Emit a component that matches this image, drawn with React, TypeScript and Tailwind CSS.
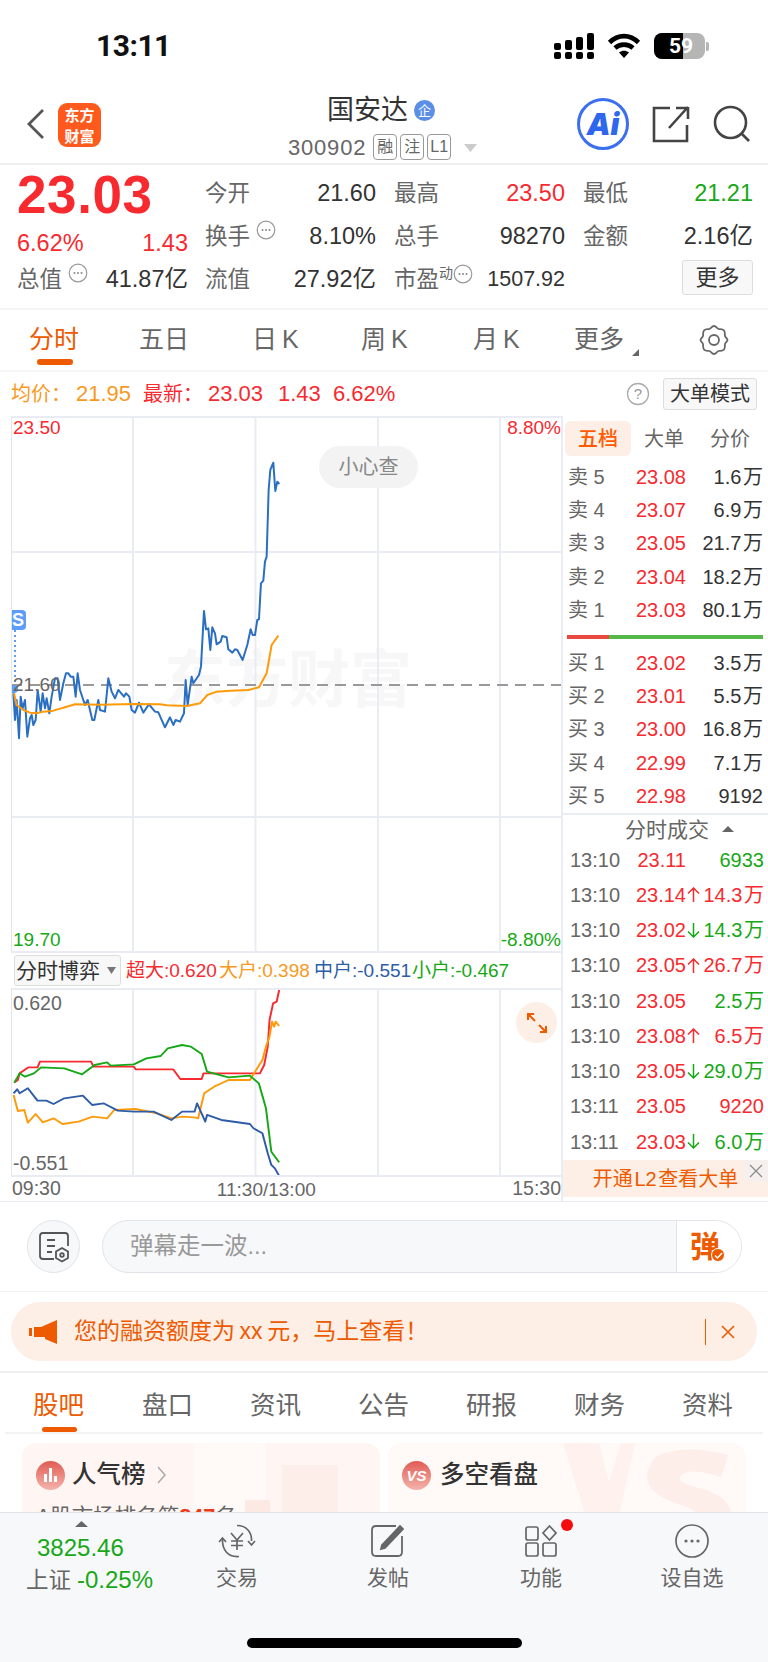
import React from "react";

const blue = "40,850 45,930 50,870 57,985 62,860 68,895 75,870 82,980 90,925 95,915 100,945 107,930 113,840 122,905 128,850 135,895 140,865 148,910 155,860 165,805 173,805 180,870 190,820 198,790 205,790 212,800 220,800 227,860 233,790 240,840 255,885 263,870 277,930 283,930 295,870 300,900 315,905 325,805 335,845 345,865 355,840 372,860 378,850 388,860 395,900 405,908 417,878 430,908 447,883 465,905 475,907 495,952 510,922 520,945 527,930 540,935 552,910 557,810 563,885 575,800 580,820 597,795 603,770 612,603 618,658 625,655 631,720 637,652 645,670 650,703 662,695 667,678 680,682 685,718 697,728 705,718 712,720 728,750 742,705 752,658 758,675 765,675 772,630 777,628 783,520 790,512 795,455 800,440 806,240 811,180 820,158 826,243 832,215 838,222";
const avg = "42,850 50,885 70,900 90,908 110,910 130,905 160,902 195,892 225,883 300,884 400,882 480,883 500,886 560,888 600,880 622,855 650,845 690,842 745,840 777,832 800,790 815,705 835,677";
const gRed = "40,458 50,450 55,430 80,412 105,412 112,395 255,395 262,410 375,410 380,418 485,418 505,447 565,447 570,430 728,430 740,405 750,350 755,270 765,220 775,215 782,180";
const gOrange = "38,495 50,543 68,540 78,578 100,552 120,577 150,565 175,582 220,575 260,560 300,565 320,540 380,537 440,550 480,565 510,560 545,562 555,565 572,490 600,470 640,450 700,450 735,390 745,350 755,320 762,275 768,290 772,275 782,288";
const gBlue = "38,490 48,478 55,490 78,475 105,512 130,512 150,522 180,505 232,497 258,525 290,520 330,542 375,545 430,545 480,570 510,545 545,545 552,520 575,575 580,555 620,570 700,582 710,595 735,610 750,670 760,705 770,715 782,738";
const gGreen = "40,458 55,430 70,440 95,430 115,412 180,415 230,433 265,405 300,397 310,407 375,403 410,385 450,378 470,355 510,345 535,350 565,372 580,425 640,442 700,437 725,460 745,535 760,665 782,697";

const sells = [["卖 5","23.08","1.6\u200a万"],["卖 4","23.07","6.9\u200a万"],["卖 3","23.05","21.7\u200a万"],["卖 2","23.04","18.2\u200a万"],["卖 1","23.03","80.1\u200a万"]];
const buys = [["买 1","23.02","3.5\u200a万"],["买 2","23.01","5.5\u200a万"],["买 3","23.00","16.8\u200a万"],["买 4","22.99","7.1\u200a万"],["买 5","22.98","9192"]];
const R = "text-[#f72a2f]";
const G = "text-[#16a816]";
const trades: [string,string,string,string,string][] = [
  ["13:10","23.11","","6933",G],
  ["13:10","23.14","up","14.3\u200a万",R],
  ["13:10","23.02","down","14.3\u200a万",G],
  ["13:10","23.05","up","26.7\u200a万",R],
  ["13:10","23.05","","2.5\u200a万",G],
  ["13:10","23.08","up","6.5\u200a万",R],
  ["13:10","23.05","down","29.0\u200a万",G],
  ["13:11","23.05","","9220",R],
  ["13:11","23.03","down","6.0\u200a万",G],
];

function Dots() {
  return (
    <svg width="20" height="20" viewBox="0 0 20 20" className="shrink-0">
      <circle cx="10" cy="10" r="8.8" fill="none" stroke="#999" strokeWidth="1.2" />
      <circle cx="6.5" cy="10" r="1" fill="#888" /><circle cx="10" cy="10" r="1" fill="#888" /><circle cx="13.5" cy="10" r="1" fill="#888" />
    </svg>
  );
}

function Cell({ label, value, cls = "text-[#333]", icon }: { label: string; value: string; cls?: string; icon?: React.ReactNode }) {
  return (
    <div className="flex items-center justify-between h-[43px]">
      <span className="flex items-start text-[#666] text-[22.5px]">{label}{icon}</span>
      <span className={`text-[23.5px] ${cls}`}>{value}</span>
    </div>
  );
}

function Chip({ children }: { children: React.ReactNode }) {
  return <span className="w-[24px] h-[26px] flex items-center justify-center border border-[#999] rounded-[4px] text-[16px] text-[#666] leading-none">{children}</span>;
}

function Grid({ y }: { y: number }) {
  return (
    <g stroke="#e9ecf3" strokeWidth="2">
      {[133, 255.5, 378, 500].map((x) => <line key={x} x1={x} x2={x} y1={y} y2={y + 600} />)}
    </g>
  );
}

function BottomItem({ label, children }: { label: string; children: React.ReactNode }) {
  return (
    <div className="flex flex-col items-center w-[110px] relative">
      <div className="h-[36px] flex items-center justify-center">{children}</div>
      <span className="text-[21px] text-[#666] mt-[6px] leading-[26px]">{label}</span>
    </div>
  );
}

function Arrow({ dir }: { dir: string }) {
  if (!dir) return null;
  return (
    <svg width="13" height="15" viewBox="0 0 13 15" fill="none" stroke={dir === "up" ? "#f72a2f" : "#16a816"} strokeWidth="1.5" className="mx-auto">
      {dir === "up" ? <path d="M6.5 15 V1 M1 6.5 L6.5 1 L12 6.5" /> : <path d="M6.5 0 V14 M1 8.5 L6.5 14 L12 8.5" />}
    </svg>
  );
}

export default function App() {
  return (
    <div className="relative w-[768px] h-[1662px] overflow-hidden bg-white flex flex-col [font-family:'Liberation_Sans','Noto_Sans_CJK_SC',sans-serif]">
      {/* status bar */}
      <div className="h-[90px] shrink-0 flex items-start pt-[29px] pl-[96px] pr-[58px] justify-between">
        <span className="text-[30px] leading-[34px] font-bold text-[#111] [font-family:Roboto,sans-serif] tracking-[-0.5px]">13:11</span>
        <div className="flex items-center gap-[13px] h-[32px] mt-[1px]">
          <svg width="40" height="26" viewBox="0 0 40 26" fill="#000">
            <rect x="0" y="10" width="7" height="7" rx="2" /><rect x="0" y="19" width="7" height="7" rx="2" />
            <rect x="11" y="7" width="7" height="10" rx="2" /><rect x="11" y="19" width="7" height="7" rx="2" />
            <rect x="22" y="4" width="7" height="13" rx="2" /><rect x="22" y="19" width="7" height="7" rx="2" />
            <rect x="33" y="0" width="7" height="17" rx="2" /><rect x="33" y="19" width="7" height="7" rx="2" />
          </svg>
          <svg width="34" height="26" viewBox="0 0 34 26" fill="none" stroke="#000" strokeWidth="4.6">
            <path d="M2.5 9.5 C11 1, 23 1, 31.5 9.5" />
            <path d="M8 15 C13 10.5, 21 10.5, 26 15" />
            <path d="M17 25 L12 19.5 C15 17.3, 19 17.3, 22 19.5 Z" fill="#000" stroke="none" />
          </svg>
          <div className="relative w-[56px] h-[26px] flex items-center">
            <div className="w-[51px] h-[26px] rounded-[8px] bg-[#b5b5b5] overflow-hidden">
              <div className="w-[29px] h-full bg-black" />
            </div>
            <div className="w-[3px] h-[9px] bg-[#b5b5b5] rounded-r-[2px] ml-[1px]" />
            <span className="absolute left-[9px] top-0 w-[36px] h-[26px] text-center leading-[26px] text-[21px] font-bold text-white [font-family:Roboto,sans-serif]">59</span>
          </div>
        </div>
      </div>

      {/* header */}
      <div className="h-[75px] shrink-0 flex items-center relative border-b-2 border-[#eeeeee]">
        <svg width="20" height="32" viewBox="0 0 20 32" className="ml-[26px] mb-[6px]" fill="none" stroke="#555" strokeWidth="2.8"><path d="M17 2 L3 16 L17 30" /></svg>
        <div className="ml-[12px] w-[43px] h-[44px] mb-[4px] rounded-[9px] bg-[#ff5a1e] text-white text-[15px] leading-[21px] font-bold flex flex-col items-center justify-center [font-family:'Noto_Sans_CJK_SC',sans-serif]">
          <p>东方</p>
          <p>财富</p>
        </div>
        <div className="absolute left-[280px] top-[2px] w-[200px] flex flex-col">
          <div className="flex items-center pl-[47px] h-[36px]">
            <span className="text-[27px] text-[#333] leading-[36px]">国安达</span>
            <span className="ml-[6px] w-[21px] h-[21px] rounded-full bg-[#5b8fe6] text-white text-[13px] flex items-center justify-center leading-none">企</span>
          </div>
          <div className="flex items-center pl-[8px] h-[30px] mt-[4px]">
            <span className="text-[22px] text-[#666] tracking-[0.8px] mr-[7px]">300902</span>
            <div className="flex gap-[3px]"><Chip>融</Chip><Chip>注</Chip><Chip>L1</Chip></div>
            <svg width="13" height="8" viewBox="0 0 13 8" className="ml-[13px] mt-[2px]"><path d="M0 0 H13 L6.5 8 Z" fill="#ccc" /></svg>
          </div>
        </div>
        <div className="ml-auto flex items-center mr-[17px] gap-[23px] mb-[6px]">
          <div className="relative w-[52px] h-[52px] rounded-full border-[3.5px] border-[#3c6ff0] flex items-center justify-center text-[#2f66ee] text-[30px] font-black italic leading-none [font-family:Inter,sans-serif]">Ai</div>
          <svg width="38" height="38" viewBox="0 0 38 38" fill="none" stroke="#444" strokeWidth="2.6">
            <path d="M18 3 H2 V36 H35 V20" />
            <path d="M36 3 H24 M36 2 V14 M36 2 L17 23" />
          </svg>
          <svg width="38" height="38" viewBox="0 0 38 38" fill="none" stroke="#444" strokeWidth="2.6">
            <circle cx="17.5" cy="17.5" r="15.5" /><path d="M28.5 28.5 L36 36" />
          </svg>
        </div>
      </div>

      {/* quote */}
      <div className="h-[145px] shrink-0 flex pl-[17px] pr-[16px] border-b-2 border-[#f5f5f5]">
        <div className="w-[171px] shrink-0 flex flex-col">
          <div className="h-[60px] text-[53px] leading-[60px] font-bold text-[#f72a2f] tracking-[0.6px]">23.03</div>
          <div className="h-[32px] flex justify-between items-end text-[23.5px] text-[#f72a2f] leading-[28px]"><span>6.62%</span><span>1.43</span></div>
          <div className="flex items-center justify-between h-[43px] mt-[1px]">
            <span className="flex items-start text-[#666] text-[22.5px]">总值<span className="ml-[6px]"><Dots /></span></span>
            <span className="text-[23.5px] text-[#333]">41.87亿</span>
          </div>
        </div>
        <div className="ml-[17px] flex-1 flex flex-col pt-[7px]">
          <div className="grid grid-cols-[171px_171px_170px] gap-x-[18px] items-center">
            <Cell label="今开" value="21.60" />
            <Cell label="最高" value="23.50" cls={R} />
            <Cell label="最低" value="21.21" cls={G} />
            <Cell label="换手" value="8.10%" icon={<span className="ml-[6px]"><Dots /></span>} />
            <Cell label="总手" value="98270" />
            <Cell label="金额" value="2.16亿" />
            <Cell label="流值" value="27.92亿" />
            <div className="flex items-center justify-between h-[43px]">
              <span className="flex items-start text-[#666] text-[22.5px] leading-[32px]">市盈<span className="text-[14px] leading-[18px]">动</span><Dots /></span>
              <span className="text-[21.5px] text-[#333]">1507.92</span>
            </div>
            <div className="flex justify-end">
              <span className="w-[71px] h-[35px] border border-[#ddd] bg-[#f8f8f9] rounded-[3px] text-[22px] text-[#333] flex items-center justify-center mb-[5px]">更多</span>
            </div>
          </div>
        </div>
      </div>

      {/* period tabs */}
      <div className="h-[62px] shrink-0 relative flex items-center border-b-2 border-[#f6f6f6] text-[25px] text-[#666]">
        <div className="w-[139px] pl-[29px] text-[#ee5a00] relative">
          分时
          <span className="absolute left-[37px] top-[38px] w-[36px] h-[6px] rounded-full bg-[#ee5a00]" />
        </div>
        <div className="w-[113px]">五日</div>
        <div className="w-[109px]">日{"\u2009"}K</div>
        <div className="w-[112px]">周{"\u2009"}K</div>
        <div className="w-[101px]">月{"\u2009"}K</div>
        <div className="flex items-end w-[125px]">更多<svg width="7" height="7" viewBox="0 0 7 7" className="ml-[8px] mb-[3px]"><path d="M7 0 V7 H0 Z" fill="#666" /></svg></div>
        <svg width="30" height="32" viewBox="0 0 30 32" fill="none" stroke="#666" strokeWidth="1.8">
          <path d="M15 2 C17 2 18 4.5 19.5 5 C21 5.5 23.5 4.5 25 6.5 C26.5 8.5 25.5 10.5 26 12 C26.5 13.5 28.5 14.5 28.5 16 C28.5 17.5 26.5 18.5 26 20 C25.5 21.5 26.5 23.5 25 25.5 C23.5 27.5 21 26.5 19.5 27 C18 27.5 17 30 15 30 C13 30 12 27.5 10.5 27 C9 26.5 6.5 27.5 5 25.5 C3.5 23.5 4.5 21.5 4 20 C3.5 18.5 1.5 17.5 1.5 16 C1.5 14.5 3.5 13.5 4 12 C4.5 10.5 3.5 8.5 5 6.5 C6.5 4.5 9 5.5 10.5 5 C12 4.5 13 2 15 2 Z" />
          <circle cx="15" cy="16" r="5" />
        </svg>
      </div>

      {/* price info row */}
      <div className="h-[44px] shrink-0 flex items-center pl-[11px] pr-[11px] text-[22px] leading-none">
        <span className="text-[#f79a1e] text-[20px] w-[65px]">均价：</span>
        <span className="text-[#f79a1e] w-[67px]">21.95</span>
        <span className="text-[#f72a2f] text-[20px] w-[65px]">最新：</span>
        <span className="text-[#f72a2f] w-[70px]">23.03</span>
        <span className="text-[#f72a2f] w-[55px]">1.43</span>
        <span className="text-[#f72a2f]">6.62%</span>
        <svg width="24" height="24" viewBox="0 0 24 24" className="ml-auto mr-[13px]" fill="none" stroke="#aaa" strokeWidth="1.3">
          <circle cx="12" cy="12" r="10.5" /><text x="12" y="17" textAnchor="middle" fontSize="15" fill="#999" stroke="none">?</text>
        </svg>
        <span className="w-[94px] h-[32px] border border-[#ddd] bg-[#f8f8f9] rounded-[3px] text-[#333] text-[20px] flex items-center justify-center">大单模式</span>
      </div>

      {/* main body */}
      <div className="h-[786px] shrink-0 flex border-b border-[#e8ebf2]">
        {/* charts */}
        <div className="w-[550px] ml-[11px] shrink-0 flex flex-col">
          <div className="relative h-[537px] shrink-0 border-t-2 border-b-2 border-[#e9ecf3] border-l border-l-[#e2e5ec] overflow-hidden">
            <div className="absolute left-[152px] top-[232px] text-[62px] leading-none font-bold text-[#f7f7f7] whitespace-nowrap">东方财富</div>
            <svg width="550" height="537" viewBox="12 418 550 537" className="absolute left-0 top-0">
              <Grid y={416} />
              <line x1="11" x2="561" y1="552" y2="552" stroke="#e9ecf3" strokeWidth="2" />
              <line x1="11" x2="561" y1="817" y2="817" stroke="#e9ecf3" strokeWidth="2" />
              <line x1="15" x2="15" y1="630" y2="688" stroke="#5b9df9" strokeWidth="2" strokeDasharray="2 3" />
              <line x1="11" x2="561" y1="685" y2="685" stroke="#999" strokeWidth="2" strokeDasharray="11 7" />
              <circle cx="14" cy="689" r="4" fill="#5b9df9" />
              <g transform="translate(0,410) scale(0.3333)" fill="none" strokeLinejoin="round">
                <polyline points={blue} stroke="#2a6fc2" strokeWidth="6" />
                <polyline points={avg} stroke="#ff9a0a" strokeWidth="6" />
              </g>
            </svg>
            <span className="absolute left-[1px] top-[0px] text-[19px] leading-[20px] text-[#f72a2f]">23.50</span>
            <span className="absolute right-0 top-[0px] text-[19px] leading-[20px] text-[#f72a2f]">8.80%</span>
            <span className="absolute left-[1px] top-[257px] text-[19px] leading-[20px] text-[#666]">21.60</span>
            <span className="absolute left-[1px] bottom-[1px] text-[19px] leading-[20px] text-[#16a816]">19.70</span>
            <span className="absolute right-0 bottom-[1px] text-[19px] leading-[20px] text-[#16a816]">-8.80%</span>
            <span className="absolute left-[-5px] top-[192px] w-[19px] h-[20px] rounded-[4px] bg-[#5b9df9] text-white text-[18px] font-bold leading-[20px] text-right pr-[2px]">S</span>
            <span className="absolute left-[307px] top-[28px] w-[99px] h-[42px] rounded-full bg-[#f3f3f3] text-[#888] text-[20px] flex items-center justify-center">小心查</span>
          </div>
          <div className="h-[35px] shrink-0 flex items-center pl-[3px] text-[19px] leading-none">
            <span className="w-[107px] h-[31px] border border-[#ddd] bg-[#f8f8f9] rounded-[3px] flex items-center pl-[1px] text-[#333] text-[21px]">
              分时博弈
              <svg width="9" height="7" viewBox="0 0 9 7" className="ml-[7px]"><path d="M0 0 H9 L4.5 7 Z" fill="#777" /></svg>
            </span>
            <span className={`ml-[5px] w-[93px] ${R}`}>超大:0.620</span>
            <span className="w-[95px] text-[#f79a1e]">大户:0.398</span>
            <span className="w-[98px] text-[#2d5da6]">中户:-0.551</span>
            <span className={G}>小户:-0.467</span>
          </div>
          <div className="relative h-[189px] shrink-0 border-t-2 border-b-2 border-[#e9ecf3] border-l border-l-[#e2e5ec] overflow-hidden">
            <svg width="550" height="189" viewBox="12 990 550 189" className="absolute left-0 top-0">
              <Grid y={988} />
              <g transform="translate(0,930) scale(0.357,0.3333)" fill="none" strokeLinejoin="round" strokeWidth="5.5">
                <polyline points={gRed} stroke="#f72a2f" />
                <polyline points={gOrange} stroke="#ff9a0a" />
                <polyline points={gBlue} stroke="#2d5da6" />
                <polyline points={gGreen} stroke="#16a816" />
              </g>
            </svg>
            <span className="absolute left-[1px] top-[3px] text-[19.5px] leading-[20px] text-[#666]">0.620</span>
            <span className="absolute left-[1px] bottom-[2px] text-[19.5px] leading-[20px] text-[#666]">-0.551</span>
            <span className="absolute left-[504px] top-[12px] w-[41px] h-[41px] rounded-full bg-[#fdeee6] flex items-center justify-center">
              <svg width="22" height="22" viewBox="0 0 22 22" fill="none" stroke="#ee5a00" strokeWidth="2">
                <path d="M2 8 V2 H8 M2 2 L9 9 M20 14 V20 H14 M20 20 L13 13" />
              </svg>
            </span>
          </div>
          <div className="h-[25px] flex items-center pl-[1px] text-[19.5px] text-[#666] leading-none">
            <span>09:30</span><span className="ml-[156px] text-[19px]">11:30/13:00</span><span className="ml-auto">15:30</span>
          </div>
        </div>

        {/* right panel */}
        <div className="flex-1 min-w-0 flex flex-col border-l-2 border-[#e9ecf3]">
          <div className="h-[44px] shrink-0 flex items-start pt-[5px] pl-[2px] text-[20px]">
            <span className="w-[66px] h-[35px] bg-[#fdeee6] rounded-[6px] text-[#ff5a00] flex items-center justify-center font-medium">五档</span>
            <span className="w-[66px] h-[35px] text-[#666] flex items-center justify-center">大单</span>
            <span className="w-[66px] h-[35px] text-[#666] flex items-center justify-center">分价</span>
          </div>
          {sells.map((r) => (
            <div key={r[0]} className="h-[33.4px] shrink-0 flex items-center pl-[5px] pr-[5px] text-[20px] leading-none">
              <span className="w-[52px] text-[#666]">{r[0]}</span>
              <span className={`w-[66px] text-right ${R}`}>{r[1]}</span>
              <span className="flex-1 text-right text-[#333]">{r[2]}</span>
            </div>
          ))}
          <div className="h-[4px] mt-[8px] mb-[7px] ml-[4px] mr-[5px] flex shrink-0">
            <div className="w-[42px] bg-[#e8483f]" /><div className="flex-1 bg-[#55b848]" />
          </div>
          {buys.map((r) => (
            <div key={r[0]} className="h-[33.4px] shrink-0 flex items-center pl-[5px] pr-[5px] text-[20px] leading-none">
              <span className="w-[52px] text-[#666]">{r[0]}</span>
              <span className={`w-[66px] text-right ${R}`}>{r[1]}</span>
              <span className="flex-1 text-right text-[#333]">{r[2]}</span>
            </div>
          ))}
          <div className="h-[29px] shrink-0 border-t-2 border-[#e9ecf3] flex items-center pl-[62px] text-[21px] text-[#666] pt-[2px]">
            分时成交
            <svg width="12" height="6" viewBox="0 0 12 6" className="ml-[13px]"><path d="M0 6 H12 L6 0 Z" fill="#666" /></svg>
          </div>
          {trades.map((t, i) => (
            <div key={i} className="h-[35.25px] shrink-0 flex items-center pl-[7px] pr-[4px] text-[20px] leading-none">
              <span className="w-[50px] text-[#666]">{t[0]}</span>
              <span className={`w-[66px] text-right ${R}`}>{t[1]}</span>
              <span className="w-[14px] flex items-center"><Arrow dir={t[2]} /></span>
              <span className={`flex-1 text-right ${t[4]} whitespace-nowrap`}>{t[3]}</span>
            </div>
          ))}
          <div className="relative h-[37px] mt-[1px] shrink-0 bg-[#fdeee6] text-[#ee5a00] text-[20px] flex items-center justify-center">
            开通{"\u200a"}L2{"\u200a"}查看大单
            <span className="absolute right-0 top-0 w-[25px] h-[22px] bg-[#f5f0ee] rounded-bl-[10px] flex items-center justify-center">
              <svg width="14" height="14" viewBox="0 0 14 14" stroke="#888" strokeWidth="1.2"><path d="M1 1 L13 13 M13 1 L1 13" /></svg>
            </span>
          </div>
        </div>
      </div>

      {/* danmaku */}
      <div className="h-[90px] shrink-0 flex items-center pl-[27px] border-b border-[#f0f0f0]">
        <div className="w-[53px] h-[53px] rounded-full border border-[#e2e3e8] bg-[#f7f8fa] flex items-center justify-center">
          <svg width="32" height="32" viewBox="0 0 32 32" fill="none" stroke="#555" strokeWidth="1.8">
            <path d="M16 28 H5 Q2 28 2 25 V5 Q2 2 5 2 H27 Q30 2 30 5 V15" />
            <path d="M9 9 H17 M9 15 H17 M9 21 H14" />
            <path d="M24 17 L30 20.5 V27 L24 30.5 L18 27 V20.5 Z" /><circle cx="24" cy="24" r="1.8" />
          </svg>
        </div>
        <div className="ml-[22px] w-[640px] h-[53px] rounded-full border border-[#e2e3e8] bg-[#f7f8fa] flex items-center overflow-hidden">
          <span className="ml-[27px] flex-1 text-[23.5px] text-[#999]">弹幕走一波...</span>
          <div className="relative w-[65px] h-full bg-white border-l border-[#e2e3e8] flex items-center justify-center text-[#ee5a00] text-[30px] font-bold leading-none pr-[8px]">
            弹
            <span className="absolute left-[34px] top-[27px] w-[14px] h-[14px] rounded-full bg-[#ee5a00] flex items-center justify-center border border-white">
              <svg width="9" height="9" viewBox="0 0 9 9" fill="none" stroke="#fff" strokeWidth="1.5"><path d="M1 4.5 L3.5 7 L8 2" /></svg>
            </span>
          </div>
        </div>
      </div>

      {/* notice */}
      <div className="h-[81px] shrink-0 px-[11px] pt-[10px] border-b-2 border-[#eeeeee]">
        <div className="h-[59px] rounded-full bg-[#fdeee6] flex items-center pl-[18px] text-[#ee5a00]">
          <svg width="28" height="24" viewBox="0 0 28 24" fill="#ee5a00">
            <rect x="0" y="8" width="3" height="8" /><path d="M5 7 H12 L28 0 V24 L16 19 V17 H5 Z" />
          </svg>
          <span className="ml-[17px] text-[23px] whitespace-nowrap">您的融资额度为{"\u2009"}xx{"\u2009"}元，马上查看！</span>
          <span className="ml-auto w-px h-[26px] bg-[#ee5a00]" />
          <svg width="14" height="14" viewBox="0 0 14 14" stroke="#ee5a00" strokeWidth="1.6" className="mr-[22px] ml-[15px]"><path d="M1 1 L13 13 M13 1 L1 13" /></svg>
        </div>
      </div>

      {/* tabs */}
      <div className="h-[61px] shrink-0 relative mx-[5px] border-b-2 border-[#f3f3f3] grid grid-cols-[137px_108px_108px_108px_108px_108px_108px] pl-[28px] pt-[14px] text-[25.5px] leading-[36px] text-[#666]">
        <span className="text-[#ee5a00] relative">股吧<span className="absolute left-[9px] top-[40px] w-[35px] h-[5px] rounded-full bg-[#ee5a00]" /></span>
        <span className="-ml-[28px]">盘口</span><span className="-ml-[28px]">资讯</span><span className="-ml-[28px]">公告</span><span className="-ml-[28px]">研报</span><span className="-ml-[28px]">财务</span><span className="-ml-[28px]">资料</span>
      </div>

      {/* cards */}
      <div className="flex-1 min-h-0 flex gap-[8px] pl-[22px] pt-[9px] overflow-hidden">
        <div className="relative w-[358px] h-[140px] rounded-[14px] bg-[#fff6f3] px-[14px] pt-[17px] overflow-hidden">
          <div className="absolute left-[172px] top-0 w-[71px] h-[110px] bg-[#fff9f7]" />
          <div className="absolute left-[260px] top-[22px] w-[56px] h-[100px] bg-[#feeeea]" />
          <div className="absolute left-[223px] top-[57px] w-[25px] h-[60px] bg-[#fde9e4]" />
          <div className="relative flex items-center">
            <span className="w-[29px] h-[29px] rounded-full bg-gradient-to-b from-[#e05a55] to-[#f2b3ac] flex items-end justify-center gap-[2px] pb-[8px]">
              <i className="w-[3px] h-[8px] bg-white" /><i className="w-[3px] h-[14px] bg-white" /><i className="w-[3px] h-[6px] bg-white" />
            </span>
            <span className="ml-[7px] text-[24.5px] font-medium text-[#333] leading-[30px]">人气榜</span>
            <svg width="9" height="18" viewBox="0 0 9 18" fill="none" stroke="#aaa" strokeWidth="1.5" className="ml-[11px]"><path d="M1 1 L8 9 L1 17" /></svg>
          </div>
          <div className="relative mt-[13px] text-[21.5px] text-[#666] leading-[28px]">A股市场排名第<span className="font-bold text-[#ee3a1a]">847</span>名</div>
        </div>
        <div className="relative w-[358px] h-[140px] rounded-[14px] bg-[#fff9f7] px-[14px] pt-[17px] overflow-hidden">
          <svg width="190" height="90" viewBox="0 0 190 90" className="absolute left-[175px] top-0" fill="#feeeea">
            <path d="M0 0 H36 L46 40 L58 0 H72 L52 90 H28 Z" fill="#fff1ed" />
            <path d="M92 14 Q120 0 165 12 L158 34 Q128 24 118 32 Q112 40 140 46 Q172 56 168 78 L160 90 H90 L96 72 Q124 82 134 74 Q138 68 112 60 Q82 48 84 32 Q86 22 92 14 Z" />
          </svg>
          <div className="relative flex items-center">
            <span className="w-[29px] h-[29px] rounded-full bg-gradient-to-b from-[#e05a55] to-[#f2b3ac] text-white text-[15px] font-bold italic flex items-center justify-center leading-none">VS</span>
            <span className="ml-[9px] text-[24.5px] font-medium text-[#333] leading-[30px]">多空看盘</span>
          </div>
        </div>
      </div>

      {/* bottom bar */}
      <div className="absolute left-0 right-0 bottom-0 h-[150px] bg-[#f7f8fa] border-t border-[#dfe1e7]">
        <div className="flex items-start">
          <div className="w-[165px] pl-[26px] shrink-0 flex flex-col">
            <svg width="13" height="6" viewBox="0 0 13 6" className="ml-[49px] mt-[8px]"><path d="M0 6 H13 L6.5 0 Z" fill="#666" /></svg>
            <span className={`ml-[11px] mt-[6px] text-[24px] leading-[30px] ${G}`}>3825.46</span>
            <div className="mt-[2px] text-[24px] leading-[30px] whitespace-nowrap"><span className="text-[#666] text-[22.5px]">上证</span><span className={`ml-[6px] ${G}`}>-0.25%</span></div>
          </div>
          <div className="flex pt-[10px]">
            <div className="ml-[17px]">
              <BottomItem label="交易">
                <svg width="40" height="34" viewBox="0 0 40 34" fill="none" stroke="#666" strokeWidth="1.7">
                  <path d="M20 1.5 C30 1.5 35 9 34.5 17 M22 32.5 C11 33.5 5 26 5.5 15" />
                  <path d="M2 18 L5.5 14 L9 18 M31 17 L34.5 21 L38 17" />
                  <path d="M14 9 L20 16 L26 9 M20 16 V26 M14 17 H26 M14 21.5 H26" />
                </svg>
              </BottomItem>
            </div>
            <div className="ml-[41px]">
              <BottomItem label="发帖">
                <svg width="36" height="34" viewBox="0 0 36 34" fill="none" stroke="#666" strokeWidth="1.8">
                  <path d="M26 2 H6 Q2 2 2 6 V28 Q2 32 6 32 H28 Q32 32 32 28 V12" />
                  <path d="M12 21 L30 2 L33 5 L15 24 L11 25 Z" fill="#666" />
                </svg>
              </BottomItem>
            </div>
            <div className="ml-[43px] relative">
              <BottomItem label="功能">
                <svg width="32" height="32" viewBox="0 0 32 32" fill="none" stroke="#666" strokeWidth="1.7">
                  <rect x="1" y="2" width="12" height="13" rx="2" /><rect x="1" y="18" width="12" height="13" rx="2" /><rect x="18" y="18" width="13" height="13" rx="2" />
                  <path d="M24.5 1 L31 8 L24.5 15 L18 8 Z" />
                </svg>
              </BottomItem>
              <span className="absolute left-[75px] top-[-4px] w-[12px] h-[12px] rounded-full bg-[#f50d0d]" />
            </div>
            <div className="ml-[41px]">
              <BottomItem label="设自选">
                <svg width="34" height="34" viewBox="0 0 34 34" fill="none" stroke="#666" strokeWidth="1.7">
                  <circle cx="17" cy="17" r="16" />
                  <circle cx="11" cy="17" r="1.6" fill="#666" stroke="none" /><circle cx="17" cy="17" r="1.6" fill="#666" stroke="none" /><circle cx="23" cy="17" r="1.6" fill="#666" stroke="none" />
                </svg>
              </BottomItem>
            </div>
          </div>
        </div>
        <div className="absolute left-[247px] top-[125px] w-[275px] h-[10px] rounded-full bg-black" />
      </div>
    </div>
  );
}
